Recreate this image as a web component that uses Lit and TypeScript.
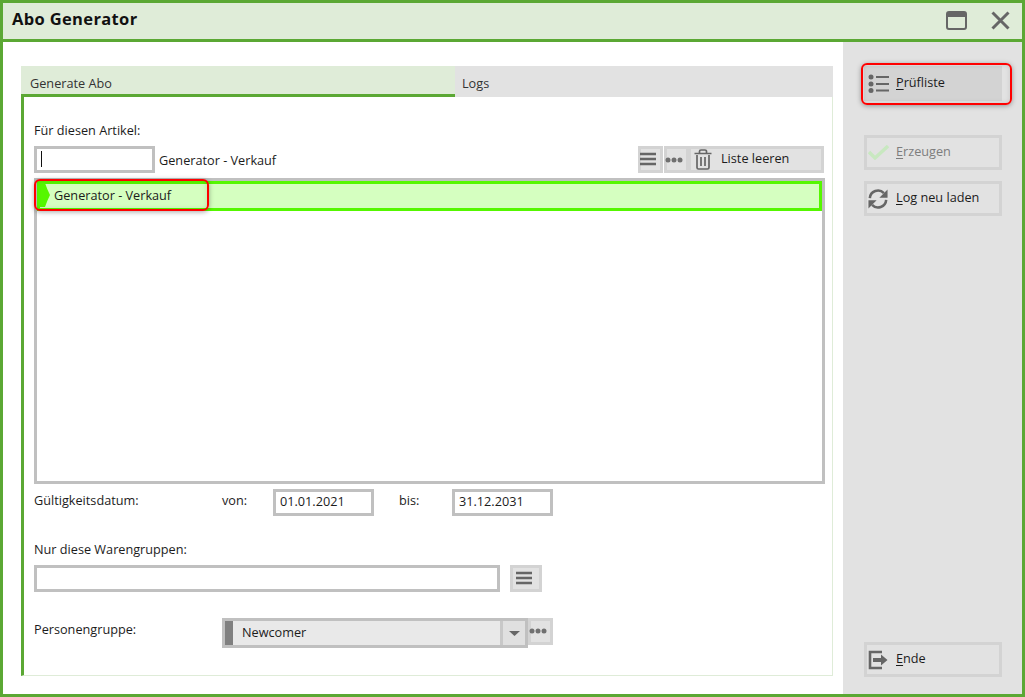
import { LitElement, html, css } from "lit";
import { customElement } from "lit/decorators.js";

const burger = html`<svg width="16" height="14" viewBox="0 0 16 14"><path d="M0 2h16M0 7h16M0 12h16" stroke="#666" stroke-width="2.400" fill="none"/></svg>`;
const dots = html`<svg width="18" height="6" viewBox="0 0 18 6"><circle cx="3" cy="3" r="2.500" fill="#707070"/><circle cx="9" cy="3" r="2.500" fill="#707070"/><circle cx="15" cy="3" r="2.500" fill="#707070"/></svg>`;

@customElement("app-root")
export class AppRoot extends LitElement {
  static styles = css`
    :host { display: block; width: 1025px; height: 697px; font-family: "Open Sans", "Noto Sans", sans-serif; font-size: 12.7px; color: #1c1c1c; }
    * { box-sizing: border-box; }
    .win { position: relative; width: 1025px; height: 697px; border: 3px solid #5ba834; display: flex; flex-direction: column; background: #fff; overflow: hidden; }
    .title { height: 39px; flex: none; background: #dfecd8; border-bottom: 3px solid #5ba834; display: flex; align-items: center; padding: 0 9px; font-weight: 700; font-size: 16.5px; letter-spacing: .35px; color: #111; }
    .title span { flex: 1; position: relative; top: -3px; }
    .title svg { display: block; }
    .winbtns { display: flex; align-items: center; gap: 24px; margin-right: 3px; position: relative; top: -1px; }
    .body { flex: 1; display: flex; min-height: 0; }
    .main { flex: 1; padding: 24px 10px 18px 18px; display: flex; flex-direction: column; }
    .side { width: 179px; flex: none; background: #e2e2e2; padding: 24px 20px 17px 21px; display: flex; flex-direction: column; }
    .tabs { display: flex; height: 31px; flex: none; }
    .tab { display: flex; align-items: center; padding: 2px 9px 0; color: #333; }
    .tab.on { width: 434px; background: #dfecd8; border-bottom: 3px solid #5ba834; padding-top: 6px; }
    .tab.off { flex: 1; background: #e2e2e2; padding-left: 7px; }
    .panel { flex: 1; border-left: 3px solid #5ba834; border-right: 1px solid #dfecd8; border-bottom: 1px solid #dfecd8; padding: 24px 7px 0 10px; display: flex; flex-direction: column; }
    .lab { height: 18px; line-height: 18px; }
    .input { border: 3px solid #c0c0c0; height: 27px; background: #fff; display: flex; align-items: center; padding: 0 0 4px 4px; flex: none; }
    .caret { width: 1px; height: 16px; background: #111; }
    .row1 { display: flex; align-items: center; margin: 7px 1px 0 0; height: 27px; }
    .row1 .input { width: 121px; padding-bottom: 2px; }
    .row1 .name { margin-left: 4px; flex: 1; padding-top: 1px; }
    .ibtn { height: 27px; border: 3px solid #d3d3d3; background: #e2e2e2; display: flex; align-items: center; justify-content: flex-start; flex: none; }
    .ib1 { width: 25px; padding-bottom: 2px; }
    .ib1 svg { margin-left: -1px; }
    .ib2 { width: 25px; margin-left: 1px; }
    .ib2 svg { margin-left: -2px; }
    .leer { width: 136px; margin-left: -1px; gap: 9px; padding: 0 0 4px 3px; }
    .leer svg { margin-top: 4px; }
    .list { margin-top: 5px; height: 306px; border: 3px solid #c0c0c0; background: #fff; flex: none; }
    .item { position: relative; height: 30px; border: 3px solid #55f700; background: #d5ffc0; display: flex; align-items: center; padding: 0 0 3px 14px; }
    .item svg { position: absolute; left: -3px; top: -1px; }
    .dates { display: flex; margin-top: 5px; height: 27px; }
    .dates .lab { margin-top: 2px; }
    .l1 { width: 188px; }
    .l2 { width: 51px; }
    .l3 { width: 53px; margin-left: 25px; }
    .dates .input { width: 101px; }
    .wg { margin-top: 24px; }
    .row3 { display: flex; margin-top: 7px; }
    .row3 .input { width: 466px; }
    .row3 .ibtn { width: 32px; margin-left: 10px; padding: 0 0 1px 3px; }
    .row4 { display: flex; margin-top: 26px; }
    .row4 .lab { width: 188px; margin-top: 2px; }
    .select { width: 306px; height: 30px; border: 3px solid #c0c0c0; background: #e9e9e9; display: flex; align-items: center; flex: none; }
    .select .bar { width: 8px; height: 100%; background: #808080; flex: none; }
    .select .val { flex: 1; padding: 0 0 2px 9px; }
    .select .arrow { width: 25px; height: 100%; background: #e0e0e0; border-left: 3px solid #c8c8c8; display: flex; align-items: center; justify-content: center; }
    .row4 .ibtn { width: 25px; padding-bottom: 2px; }
    .row4 .ibtn svg { margin-left: -2px; }
    .sbtn { height: 35px; border: 3px solid #d3d3d3; display: flex; align-items: center; flex: none; }
    .sbtn svg { flex: none; display: block; }
    .sbtn .t { padding-bottom: 4px; }
    .sbtn .ic { width: 29px; padding-left: 1px; display: flex; justify-content: flex-start; flex: none; }
    .sbtn u { text-underline-offset: 2px; }
    .sbtn.fill { background: #d3d3d3; }
    .sbtn.dis { color: #7d7d7d; }
    .gap1 { height: 34px; flex: none; }
    .gap2 { height: 11px; flex: none; }
    .grow { flex: 1; }
    .mark { position: absolute; border: 2px solid #f00; border-radius: 6px; box-shadow: 0 1px 5px rgba(0,0,0,.35), inset 0 0 5px rgba(0,0,0,.12); pointer-events: none; }
    .m1 { left: 31px; top: 176px; width: 175px; height: 32px; }
    .m2 { left: 858px; top: 60px; width: 151px; height: 42px; }
  `;

  render() {
    return html`<div class="win">
      <div class="title"><span>Abo Generator</span>
        <div class="winbtns">
          <svg width="21" height="19" viewBox="0 0 21 19"><rect x="1" y="1" width="19" height="17" rx="2" fill="none" stroke="#666" stroke-width="2"/><rect x="1" y="1" width="19" height="5" fill="#666"/></svg>
          <svg width="19" height="19" viewBox="0 0 19 19"><path d="M1.500 1.500l16 16M17.500 1.500l-16 16" stroke="#666" stroke-width="3" fill="none"/></svg>
        </div>
      </div>
      <div class="body">
        <div class="main">
          <div class="tabs"><div class="tab on">Generate Abo</div><div class="tab off">Logs</div></div>
          <div class="panel">
            <div class="lab">Für diesen Artikel:</div>
            <div class="row1">
              <div class="input"><div class="caret"></div></div>
              <div class="name">Generator - Verkauf</div>
              <div class="ibtn ib1">${burger}</div>
              <div class="ibtn ib2">${dots}</div>
              <div class="ibtn leer">
                <svg width="18" height="21" viewBox="0 0 18 21"><path d="M3 6v12.500A1.500 1.500 0 0 0 4.500 20h9a1.500 1.500 0 0 0 1.500-1.500V6M.5 4.500h17M5.500 4V2.500A1.500 1.500 0 0 1 7 1h4a1.500 1.500 0 0 1 1.500 1.500V4M7 8v9M11 8v9" fill="none" stroke="#666" stroke-width="1.700"/></svg>
                <span>Liste leeren</span>
              </div>
            </div>
            <div class="list">
              <div class="item">
                <svg width="15" height="24" viewBox="0 0 15 24"><path d="M0 0h8q2 6 5 12q-3 6-5 12H0z" fill="#55f700"/></svg>
                Generator - Verkauf
              </div>
            </div>
            <div class="dates">
              <div class="lab l1">Gültigkeitsdatum:</div>
              <div class="lab l2">von:</div>
              <div class="input">01.01.2021</div>
              <div class="lab l3">bis:</div>
              <div class="input">31.12.2031</div>
            </div>
            <div class="lab wg">Nur diese Warengruppen:</div>
            <div class="row3"><div class="input"></div><div class="ibtn">${burger}</div></div>
            <div class="row4">
              <div class="lab">Personengruppe:</div>
              <div class="select"><div class="bar"></div><div class="val">Newcomer</div>
                <div class="arrow"><svg width="11" height="5" viewBox="0 0 11 5"><path d="M0 0h11L5.500 5z" fill="#666"/></svg></div>
              </div>
              <div class="ibtn">${dots}</div>
            </div>
          </div>
        </div>
        <div class="side">
          <div class="sbtn fill"><div class="ic">
            <svg width="21" height="19" viewBox="0 0 21 19"><g fill="#666"><circle cx="3" cy="3" r="2.500"/><circle cx="3" cy="10" r="2.500"/><circle cx="3" cy="16.500" r="2.500"/></g><path d="M8 3h13M8 10h13M8 16.500h13" stroke="#666" stroke-width="2"/></svg>
          </div><span class="t"><u>P</u>rüfliste</span></div>
          <div class="gap1"></div>
          <div class="sbtn dis"><div class="ic">
            <svg width="21" height="15" viewBox="0 0 21 15"><path d="M1 7l6 6L20 1" fill="none" stroke="#c8e8c0" stroke-width="3.400"/></svg>
          </div><span class="t"><u>E</u>rzeugen</span></div>
          <div class="gap2"></div>
          <div class="sbtn"><div class="ic">
            <svg width="20" height="20" viewBox="0 0 22 22"><path d="M2 10a9 9 0 0 1 15.500-5.500M20 12a9 9 0 0 1-15.500 5.500" fill="none" stroke="#666" stroke-width="2.800"/><path d="M21.500 .5v9h-9zM.5 21.500v-9h9z" fill="#666"/></svg>
          </div><span class="t"><u>L</u>og neu laden</span></div>
          <div class="grow"></div>
          <div class="sbtn"><div class="ic">
            <svg width="20" height="20" viewBox="0 0 20 20"><path d="M14 2H2v16h12" fill="none" stroke="#666" stroke-width="2.600"/><path d="M5 8h8V4.500L19.500 10 13 15.500V12H5z" fill="#666"/></svg>
          </div><span class="t"><u>E</u>nde</span></div>
        </div>
      </div>
      <div class="mark m1"></div>
      <div class="mark m2"></div>
    </div>`;
  }
}
